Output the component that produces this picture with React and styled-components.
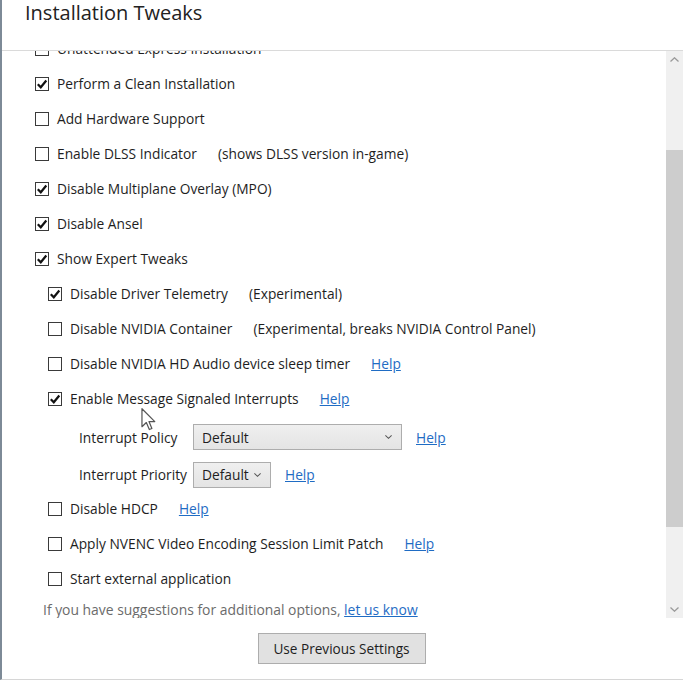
import React from "react";
import styled, { createGlobalStyle } from "styled-components";

const GlobalStyle = createGlobalStyle`
  html, body {
    margin: 0;
    padding: 0;
    background: #ffffff;
  }
  body {
    font-family: "Open Sans", "Noto Sans", sans-serif;
    color: #1e1e1e;
  }
`;

const Window = styled.div`
  position: relative;
  width: 683px;
  height: 680px;
  box-sizing: border-box;
  border-left: 2px solid #7d8a97;
  border-bottom: 1px solid #d6d6d6;
  background: #fff;
  display: flex;
  flex-direction: column;
  overflow: hidden;
`;

const Header = styled.header`
  height: 50px;
  flex-shrink: 0;
  border-bottom: 1px solid #dadada;
  padding-left: 23px;
`;

const Title = styled.h1`
  margin: 0;
  font-size: 20px;
  line-height: 26px;
  font-weight: 400;
  color: #222;
`;

const Body = styled.div`
  display: flex;
  height: 567px;
  flex-shrink: 0;
`;

const Viewport = styled.div`
  flex: 1;
  overflow: hidden;
`;

const Content = styled.div`
  margin-top: -20px;
  font-size: 13.75px;
`;

const Row = styled.div`
  display: flex;
  align-items: center;
  height: ${(p) => p.$h || 35}px;
  padding-left: ${(p) => p.$indent}px;
  white-space: nowrap;
`;

const Box = styled.span`
  width: 14px;
  height: 14px;
  box-sizing: border-box;
  border: 1px solid #3a3a3a;
  background: #fff;
  margin-right: 8px;
  flex-shrink: 0;
  display: flex;
  align-items: center;
  justify-content: center;
`;

const Label = styled.span`
  color: #1e1e1e;
`;

const Note = styled.span`
  margin-left: 21px;
  color: #1e1e1e;
`;

const Link = styled.a`
  margin-left: ${(p) => (p.$gap === undefined ? 21 : p.$gap)}px;
  color: #1f6cc4;
  text-decoration: underline;
  cursor: pointer;
`;

const FieldLabel = styled.span`
  width: 114px;
  flex-shrink: 0;
  color: #1e1e1e;
`;

const Select = styled.div`
  width: ${(p) => p.$w}px;
  height: 26px;
  box-sizing: border-box;
  border: 1px solid #adadad;
  background: linear-gradient(#efefef, #e4e4e4);
  display: flex;
  align-items: center;
  justify-content: space-between;
  padding: 0 9px 0 8px;
  color: #1e1e1e;
`;

const Hint = styled.div`
  display: flex;
  align-items: center;
  height: 27px;
  padding-left: 41px;
  color: #6b6b6b;
  white-space: nowrap;
  font-size: 13.9px;
`;

const ScrollBar = styled.div`
  width: 17px;
  flex-shrink: 0;
  background: #f0f0f0;
  display: flex;
  flex-direction: column;
`;

const Arrow = styled.div`
  height: 17px;
  display: flex;
  align-items: center;
  justify-content: center;
`;

const Track = styled.div`
  flex: 1;
`;

const Thumb = styled.div`
  margin-top: 82px;
  height: 377px;
  background: #cdcdcd;
`;

const Footer = styled.div`
  flex: 1;
  display: flex;
  align-items: center;
  justify-content: center;
  padding-right: 2px;
`;

const Button = styled.button`
  width: 168px;
  height: 31px;
  border: 1px solid #adadad;
  background: #e1e1e1;
  font-family: "Open Sans", "Noto Sans", sans-serif;
  font-size: 13.6px;
  color: #1e1e1e;
  padding: 0;
`;

const Pointer = styled.svg`
  position: absolute;
  left: 139px;
  top: 408px;
`;

function Check({ on }) {
  return (
    <Box>
      {on && (
        <svg width="12" height="12" viewBox="0 0 12 12">
          <path d="M1.8 6.2 L4.8 9.3 L10.3 2.5" fill="none" stroke="#111" strokeWidth="2.2" />
        </svg>
      )}
    </Box>
  );
}

function Chevron({ up, color = "#9a9a9a", w = 9, h = 5 }) {
  return (
    <svg width={w} height={h} viewBox="0 0 9 5">
      <path
        d={up ? "M0.5 4.5 L4.5 0.8 L8.5 4.5" : "M0.5 0.5 L4.5 4.2 L8.5 0.5"}
        fill="none"
        stroke={color}
        strokeWidth="1.3"
      />
    </svg>
  );
}

function Option({ on, label, note, help, indent = 33, h }) {
  return (
    <Row $indent={indent} $h={h}>
      <Check on={on} />
      <Label>{label}</Label>
      {note && <Note>{note}</Note>}
      {help && <Link>Help</Link>}
    </Row>
  );
}

export default function App() {
  const basic = [
    { on: false, label: "Unattended Express Installation" },
    { on: true, label: "Perform a Clean Installation" },
    { on: false, label: "Add Hardware Support" },
    { on: false, label: "Enable DLSS Indicator", note: "(shows DLSS version in-game)" },
    { on: true, label: "Disable Multiplane Overlay (MPO)" },
    { on: true, label: "Disable Ansel" },
    { on: true, label: "Show Expert Tweaks" },
  ];
  const expert = [
    { on: true, label: "Disable Driver Telemetry", note: "(Experimental)" },
    { on: false, label: "Disable NVIDIA Container", note: "(Experimental, breaks NVIDIA Control Panel)" },
    { on: false, label: "Disable NVIDIA HD Audio device sleep timer", help: true },
    { on: true, label: "Enable Message Signaled Interrupts", help: true },
  ];
  const tail = [
    { on: false, label: "Disable HDCP", help: true },
    { on: false, label: "Apply NVENC Video Encoding Session Limit Patch", help: true },
    { on: false, label: "Start external application" },
  ];

  return (
    <>
      <GlobalStyle />
      <Window>
        <Header>
          <Title>Installation Tweaks</Title>
        </Header>
        <Body>
          <Viewport>
            <Content>
              {basic.map((o) => (
                <Option key={o.label} {...o} />
              ))}
              {expert.map((o) => (
                <Option key={o.label} indent={46} {...o} />
              ))}
              <Row $indent={77} $h={42}>
                <FieldLabel>Interrupt Policy</FieldLabel>
                <Select $w={209}>
                  <span>Default</span>
                  <Chevron color="#555" w={7} h={4} />
                </Select>
                <Link $gap={14}>Help</Link>
              </Row>
              <Row $indent={77} $h={33}>
                <FieldLabel>Interrupt Priority</FieldLabel>
                <Select $w={78}>
                  <span>Default</span>
                  <Chevron color="#555" w={7} h={4} />
                </Select>
                <Link $gap={14}>Help</Link>
              </Row>
              {tail.map((o) => (
                <Option key={o.label} indent={46} {...o} />
              ))}
              <Hint>
                If you have suggestions for additional options,&nbsp;
                <Link $gap={0}>let us know</Link>
              </Hint>
            </Content>
          </Viewport>
          <ScrollBar>
            <Arrow>
              <Chevron up />
            </Arrow>
            <Track>
              <Thumb />
            </Track>
            <Arrow>
              <Chevron />
            </Arrow>
          </ScrollBar>
        </Body>
        <Footer>
          <Button>Use Previous Settings</Button>
        </Footer>
        <Pointer width="15" height="23" viewBox="0 0 12 19">
          <path
            d="M0.6 0.6 L0.6 15.5 L4.2 12 L6.7 17.8 L8.8 16.9 L6.4 11.2 L11.2 11.2 Z"
            fill="#fff"
            stroke="#555"
            strokeWidth="1"
            strokeLinejoin="round"
          />
        </Pointer>
      </Window>
    </>
  );
}
